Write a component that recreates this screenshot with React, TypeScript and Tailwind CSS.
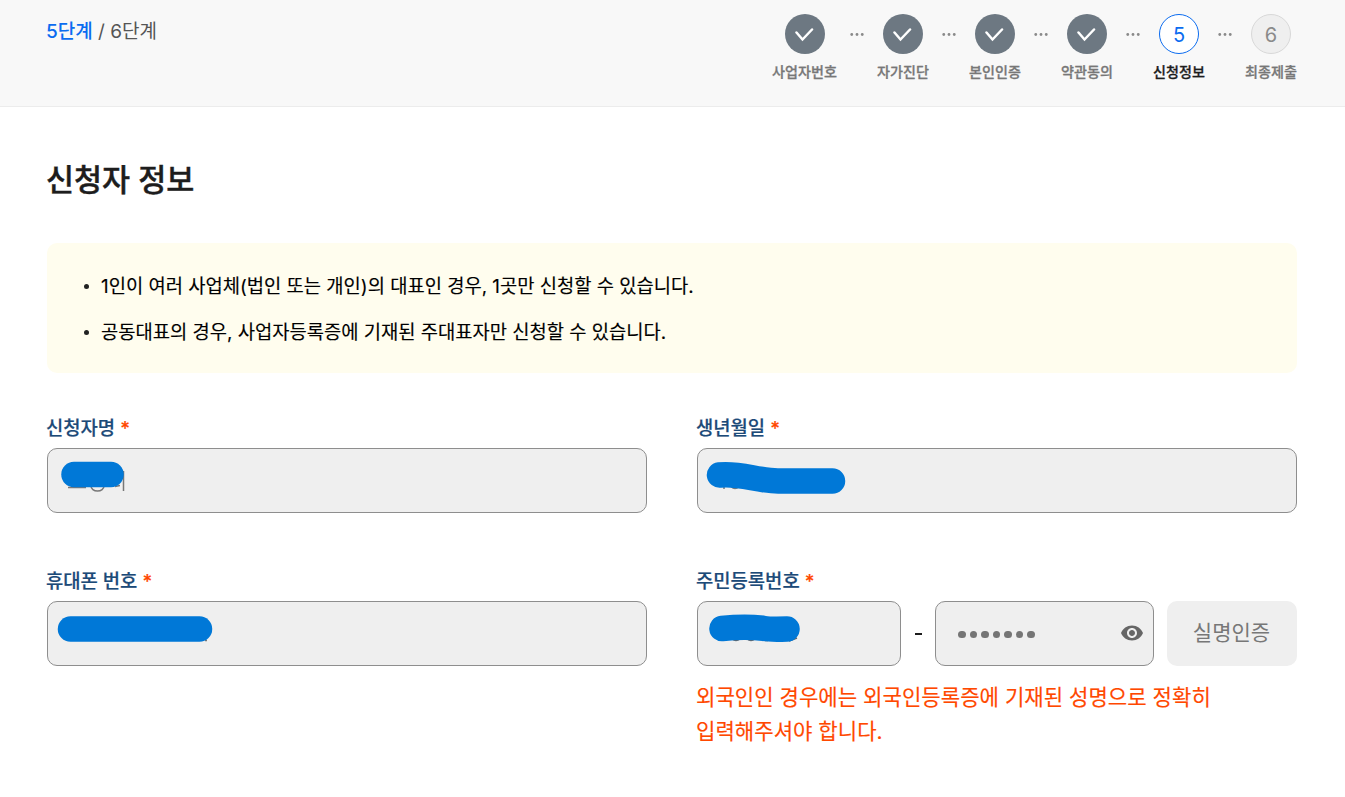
import type { ReactNode } from 'react'
import { MdVisibility } from 'react-icons/md'

interface Step {
  label: string
  status: 'done' | 'current' | 'todo'
}

const steps: Step[] = [
  { label: '사업자번호', status: 'done' },
  { label: '자가진단', status: 'done' },
  { label: '본인인증', status: 'done' },
  { label: '약관동의', status: 'done' },
  { label: '신청정보', status: 'current' },
  { label: '최종제출', status: 'todo' },
]

const notices = [
  '1인이 여러 사업체(법인 또는 개인)의 대표인 경우, 1곳만 신청할 수 있습니다.',
  '공동대표의 경우, 사업자등록증에 기재된 주대표자만 신청할 수 있습니다.',
]

export default function App() {
  return (
    <div className="h-[797px] w-[1345px] overflow-hidden bg-white font-[Inter,'Noto_Sans_CJK_KR',sans-serif] whitespace-nowrap">
      <header className="flex h-[107px] justify-between border-b border-[#ececec] bg-[#f8f8f8] pr-12 pl-[47px]">
        <p className="-ml-px pt-[17px] text-[19px] leading-[30px] text-[#555]">
          <span className="font-medium text-[#0b6cf0]">5단계</span> / 6단계
        </p>
        <ol className="flex pt-3.5">
          {steps.map((step, index) => (
            <StepItem key={step.label} step={step} number={index + 1} />
          ))}
        </ol>
      </header>

      <main className="pr-12 pl-[47px]">
        <h1 className="-ml-px pt-[49px] text-[30.5px] leading-[48px] font-medium text-[#1d1d1d] [-webkit-text-stroke:0.4px]">
          신청자 정보
        </h1>

        <ul className="mt-[39px] flex h-[130px] flex-col gap-[15px] rounded-[10px] bg-[#fffdee] pt-7 pl-[37px] text-[18.75px] leading-[30px] text-black [-webkit-text-stroke:0.15px]">
          {notices.map((notice) => (
            <li key={notice} className="flex items-center">
              <span className="mr-3 size-[5px] rounded-full bg-[#222]" />
              <span className="pt-px">{notice}</span>
            </li>
          ))}
        </ul>

        <div className="mt-10 grid grid-cols-[600px_600px] gap-x-[50px]">
          <Field label="신청자명">
            <InputBox className="w-full">
              <svg className="absolute top-0 left-0" width="160" height="63" fill="none">
                <path d="M20 38.5h18M67 37.5l5-1M75.5 22v20" stroke="#777" strokeWidth="1.5" />
                <ellipse cx="49.5" cy="37" rx="6.5" ry="5" stroke="#777" strokeWidth="1.5" />
                <path d="M26 25.5h37" stroke="#0078d7" strokeWidth="25.5" strokeLinecap="round" />
              </svg>
            </InputBox>
          </Field>
          <Field label="생년월일">
            <InputBox className="w-full">
              <svg className="absolute top-0 left-0" width="160" height="63" fill="none">
                <path d="M26 36v4M33 37.5q4 4 8 0" stroke="#777" strokeWidth="1.5" />
                <path
                  d="M21.5 26C41 23.5 60 32 80 32H134.5"
                  stroke="#0078d7"
                  strokeWidth="25.5"
                  strokeLinecap="round"
                />
              </svg>
            </InputBox>
          </Field>
        </div>

        <div className="mt-[53px] grid grid-cols-[600px_600px] gap-x-[50px]">
          <Field label="휴대폰 번호">
            <InputBox className="w-full">
              <svg className="absolute top-0 left-0" width="180" height="63" fill="none">
                <path d="M157 38.5h2" stroke="#777" strokeWidth="1.5" />
                <path d="M22.5 27H151.5" stroke="#0078d7" strokeWidth="25.5" strokeLinecap="round" />
              </svg>
            </InputBox>
          </Field>
          <Field label="주민등록번호">
            <div className="flex">
              <InputBox className="w-[204px]">
                <svg className="absolute top-0 left-0" width="120" height="63" fill="none">
                  <path d="M34 37q4 3 8 0M49 37q4 3 8 0M67 38.5h3M91 39l8-3" stroke="#666" strokeWidth="1.5" />
                  <path
                    d="M24 26.5C42 24.5 56 25 66 26.5Q72 27.5 89 27"
                    stroke="#0078d7"
                    strokeWidth="25.5"
                    strokeLinecap="round"
                  />
                </svg>
              </InputBox>
              <span className="flex w-[34px] items-center justify-center">
                <span className="h-[2px] w-[7px] bg-[#1d1d1d]" />
              </span>
              <InputBox className="flex w-[219px] items-center justify-between pr-[9px] pl-[22px]">
                <span className="flex gap-1 pt-0.5">
                  {Array.from({ length: 7 }, (_, i) => (
                    <span key={i} className="size-[7.5px] rounded-full bg-[#757575]" />
                  ))}
                </span>
                <MdVisibility className="mb-px size-6 text-[#666]" />
              </InputBox>
              <button className="ml-[13px] h-[65px] w-[130px] rounded-[10px] bg-[#efefef] pr-px pb-0.5 text-[21px] text-[#777]">
                실명인증
              </button>
            </div>
            <p className="-ml-px pt-[15px] text-[21.1px] leading-[34px] text-[#ff4800] [-webkit-text-stroke:0.15px]">
              외국인인 경우에는 외국인등록증에 기재된 성명으로 정확히
              <br />
              입력해주셔야 합니다.
            </p>
          </Field>
        </div>
      </main>
    </div>
  )
}

function StepItem({ step, number }: { step: Step; number: number }) {
  const circle = {
    done: 'bg-[#6d7882]',
    current: 'border border-[#0b6cf0] bg-white text-[#0b6cf0]',
    todo: 'border border-[#d8d8d8] bg-[#efefef] text-[#8a8a8a]',
  }[step.status]

  return (
    <>
      {number > 1 && (
        <li className="flex h-10 w-10 items-center justify-center">
          <svg width="14" height="3" viewBox="0 0 14 3" fill="#8a8a8a">
            <circle cx="1.75" cy="1.5" r="1.4" />
            <circle cx="7" cy="1.5" r="1.4" />
            <circle cx="12.25" cy="1.5" r="1.4" />
          </svg>
        </li>
      )}
      <li className={`flex flex-col items-center ${number === 1 ? 'w-[65px]' : 'w-[52px]'}`}>
        <span className={`flex size-10 items-center justify-center rounded-full pt-px text-[20px] ${circle}`}>
          {step.status === 'done' ? (
            <svg width="20" height="14" viewBox="0 0 20 14" fill="none">
              <path d="M1.5 4.500l6 7 9.500-10" stroke="white" strokeWidth="2.5" strokeLinecap="round" />
            </svg>
          ) : (
            number
          )}
        </span>
        <span
          className={`mt-[7px] text-[14.1px] leading-[22px] font-medium [-webkit-text-stroke:0.3px] ${step.status === 'current' ? 'text-[#1d1d1d]' : 'text-[#777]'}`}
        >
          {step.label}
        </span>
      </li>
    </>
  )
}

function Field({ label, children }: { label: string; children: ReactNode }) {
  return (
    <div>
      <p className="-ml-px h-[35px] pt-px text-[18.8px] leading-[30px] font-medium text-[#1c4a78] [-webkit-text-stroke:0.2px]">
        {label} <span className="text-[#ff4800]">*</span>
      </p>
      {children}
    </div>
  )
}

function InputBox({ className, children }: { className: string; children: ReactNode }) {
  return <div className={`relative h-[65px] rounded-[10px] border border-[#8e8e8e] bg-[#efefef] ${className}`}>{children}</div>
}
